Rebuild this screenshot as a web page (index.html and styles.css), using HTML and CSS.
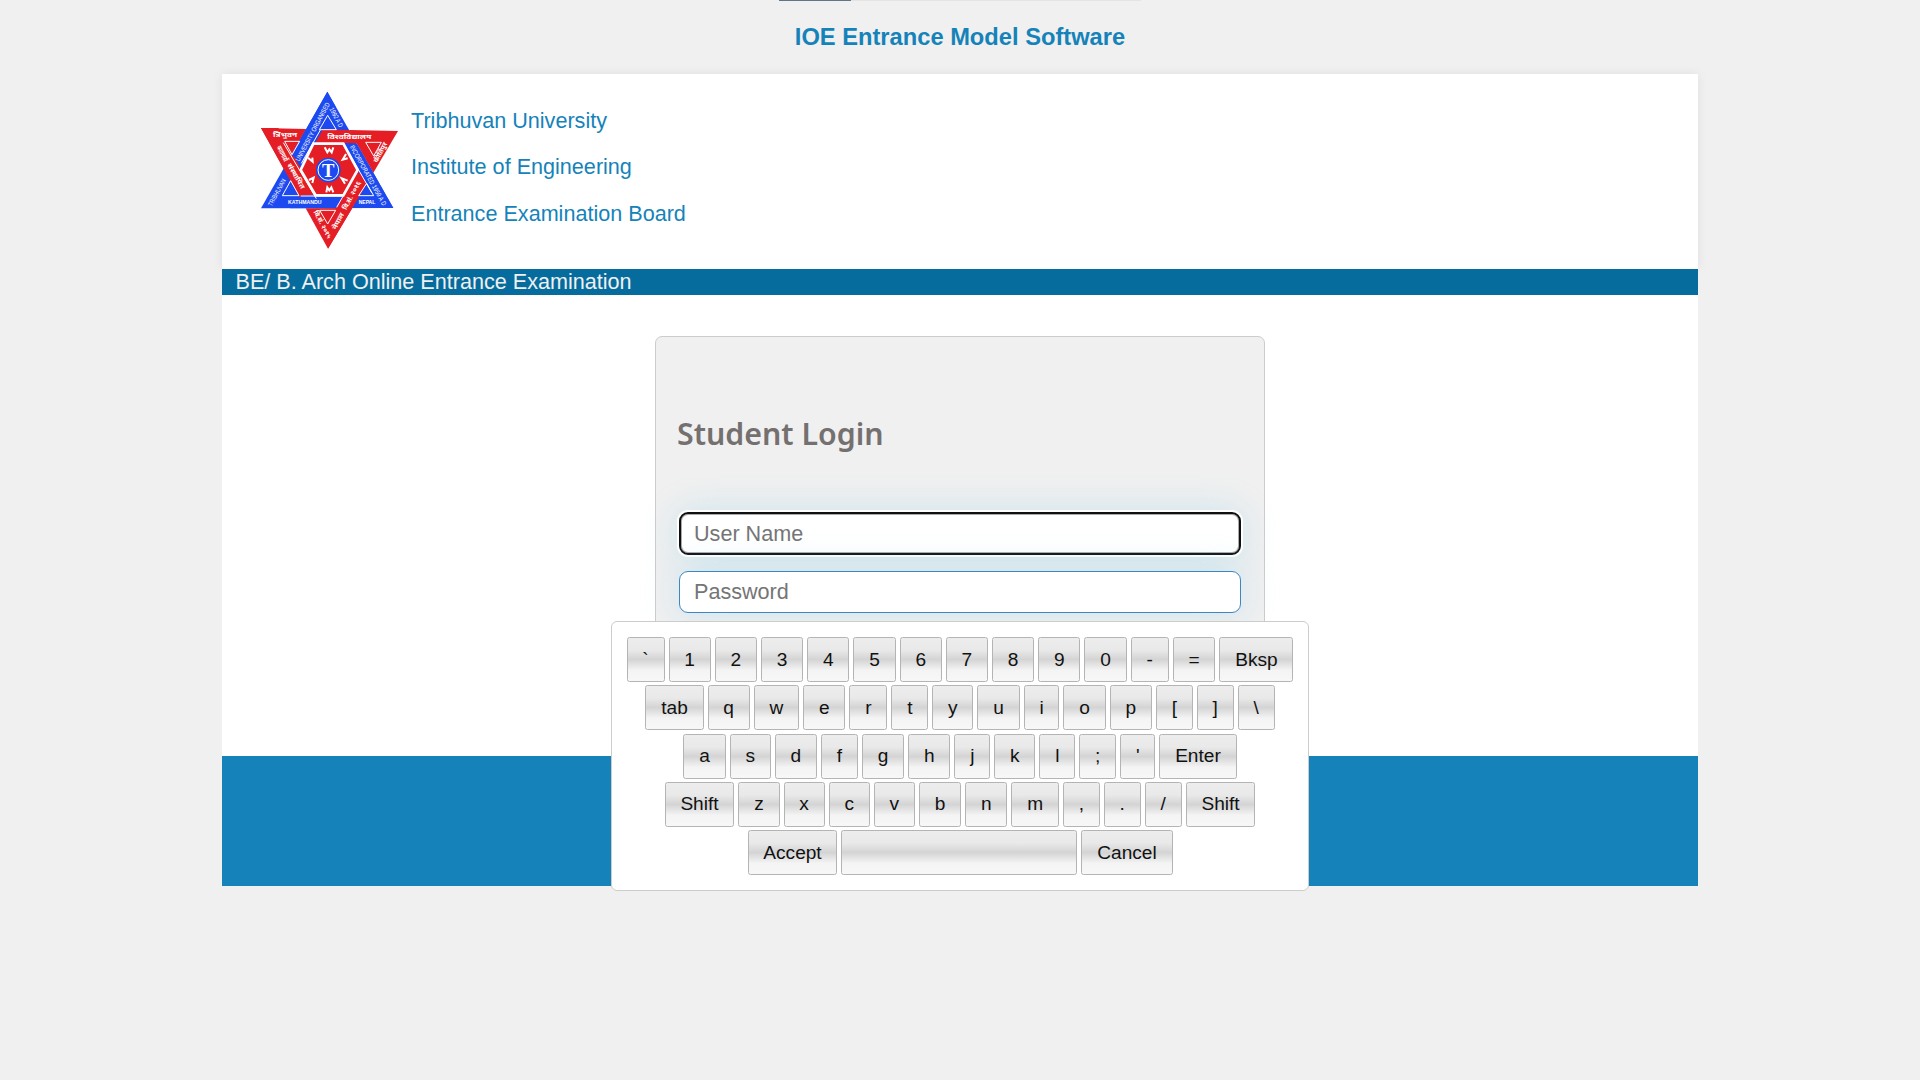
FILE: index.html
```html
<!DOCTYPE html>
<html lang="en">
<head>
<meta charset="utf-8">
<title>IOE Entrance Model Software</title>
<link rel="stylesheet" href="styles.css">
</head>
<body>
<div class="progress"><div class="progress-value"></div></div>
<h1 class="page-title">IOE Entrance Model Software</h1>
<div class="container">
  <header class="header">
    <svg class="logo" viewBox="0 0 480 540" role="img" aria-label="Tribhuvan University">
      <!-- blue and red triangle tips -->
      <polygon class="blue" points="232,35 430,384 33,385"/>
      <polygon class="red" points="33,144 168,147 101,266"/>
      <polygon class="red" points="444,153 297,150 370,278"/>
      <polygon class="red" points="234,506 167,385 307,384"/>
      <!-- interlaced bands -->
      <polygon class="red" points="168,147 297,150 322,190 145,187"/>
      <polygon class="red" points="33,144 85,144 204,358 152,358"/>
      <polygon class="blue" points="155,346 330,346 306,384 120,385"/>
      <polygon class="red" points="370,278 322,278 232,430 234,506"/>
      <polygon class="blue" points="282,192 321,192 430,384 390,384"/>
      <polygon class="blue" points="168,147 210,155 154,252 125,224"/>
      <polygon class="blue" points="232,35 257,80 160,252 125,224"/>
      <path class="edge" d="M211 150 154 250M283 195 365 338M320 278 260 382M100 188 199 356M152 348H275"/>
      <path class="edge" d="M233 106 208 149H259ZM104 184H149L126 224ZM347 187H394L371 228ZM97 347 122 302 147 347ZM326 347H371L350 310ZM209 391H257L233 432Z"/>
      <!-- centre seal -->
      <polygon class="hexagon" points="190,191 280,191 323,270 280,346 197,346 152,270"/>
      <path class="petals" d="M224 202 232 217 238 208 245 217 250 202M229 337 232 322 238 331 244 322 250 337M174 233 188 245 187 233M177 300 191 293 187 309M288 222 278 239 293 235M285 311 275 295 293 302"/>
      <circle class="seal" cx="235" cy="270" r="37"/>
      <circle class="seal-ring" cx="235" cy="270" r="31"/>
      <text class="seal-letter" x="216" y="290">T</text>
      <!-- lettering on the bands -->
      <g class="lettering">
        <text transform="translate(148 245) rotate(-62)" textLength="196" lengthAdjust="spacingAndGlyphs">UNIVERSITY ORGANISED</text>
        <text transform="translate(238 87) rotate(62)" textLength="64" lengthAdjust="spacingAndGlyphs">1992 A D</text>
        <text transform="translate(299 200) rotate(61)" textLength="204" lengthAdjust="spacingAndGlyphs">INCORPORATED 1959 A D</text>
        <text transform="translate(65 380) rotate(-61)" textLength="90" lengthAdjust="spacingAndGlyphs">TRIBHUVAN</text>
        <text class="place" x="114" y="373" textLength="101" lengthAdjust="spacingAndGlyphs">KATHMANDU</text>
        <text class="place" x="326" y="373" textLength="50" lengthAdjust="spacingAndGlyphs">NEPAL</text>
      </g>
      <g class="lettering nepali">
        <text x="69" y="171" textLength="72" lengthAdjust="spacingAndGlyphs">त्रिभुवन</text>
        <text x="232" y="177" textLength="132" lengthAdjust="spacingAndGlyphs">विश्वविद्यालय</text>
        <text transform="translate(80 202) rotate(62)" textLength="50" lengthAdjust="spacingAndGlyphs">काठमाडौं</text>
        <text transform="translate(111 255) rotate(60)" textLength="84" lengthAdjust="spacingAndGlyphs">संस्थापित</text>
        <text transform="translate(382 249) rotate(-62)" textLength="65" lengthAdjust="spacingAndGlyphs">कीर्तिपुर</text>
        <text transform="translate(190 396) rotate(62)" textLength="92" lengthAdjust="spacingAndGlyphs">वि.सं. २०१५</text>
        <text transform="translate(258 450) rotate(-62)" textLength="53" lengthAdjust="spacingAndGlyphs">नेपाल</text>
        <text transform="translate(289 391) rotate(-62)" textLength="94" lengthAdjust="spacingAndGlyphs">वि.सं. २०१६</text>
      </g>
    </svg>
    <div class="organisation">
      <div>Tribhuvan University</div>
      <div>Institute of Engineering</div>
      <div>Entrance Examination Board</div>
    </div>
  </header>
  <div class="exam-bar">BE/ B. Arch Online Entrance Examination</div>
  <main class="content">
    <form class="login">
      <h2 class="login-title">Student Login</h2>
      <input class="field field-focused" type="text" placeholder="User Name">
      <input class="field" type="password" placeholder="Password">
    </form>
  </main>
  <footer class="footer"></footer>
</div>
<div class="keyboard">
  <div class="key-row"><button class="key">`</button><button class="key">1</button><button class="key">2</button><button class="key">3</button><button class="key">4</button><button class="key">5</button><button class="key">6</button><button class="key">7</button><button class="key">8</button><button class="key">9</button><button class="key">0</button><button class="key">-</button><button class="key">=</button><button class="key">Bksp</button></div>
  <div class="key-row"><button class="key">tab</button><button class="key">q</button><button class="key">w</button><button class="key">e</button><button class="key">r</button><button class="key">t</button><button class="key">y</button><button class="key">u</button><button class="key">i</button><button class="key">o</button><button class="key">p</button><button class="key">[</button><button class="key">]</button><button class="key">\</button></div>
  <div class="key-row"><button class="key">a</button><button class="key">s</button><button class="key">d</button><button class="key">f</button><button class="key">g</button><button class="key">h</button><button class="key">j</button><button class="key">k</button><button class="key">l</button><button class="key">;</button><button class="key">'</button><button class="key">Enter</button></div>
  <div class="key-row"><button class="key">Shift</button><button class="key">z</button><button class="key">x</button><button class="key">c</button><button class="key">v</button><button class="key">b</button><button class="key">n</button><button class="key">m</button><button class="key">,</button><button class="key">.</button><button class="key">/</button><button class="key">Shift</button></div>
  <div class="key-row"><button class="key">Accept</button><button class="key key-space" aria-label="Space"></button><button class="key">Cancel</button></div>
</div>
</body>
</html>
```
FILE: styles.css
```css
* { box-sizing: border-box; }

body {
  margin: 0;
  height: 1080px;
  overflow: hidden;
  background: #f0f0f0;
  color: #1583b9;
  font-family: "Liberation Sans", Arial, sans-serif;
  font-size: 21.6px;
}

.progress { width: 362px; height: 1px; margin: 0 auto; background: #e4e4e4; }
.progress-value { width: 72px; height: 1px; background: #607586; }

.page-title {
  margin: 0;
  height: 73px;
  font-size: 23.7px;
  line-height: 72px;
  text-align: center;
}

.container { width: 1476px; margin: 0 auto; background: #fff; }

.header {
  display: flex;
  height: 195px;
  padding: 6px 28px;
  box-shadow: 0 0 10px rgba(0, 0, 0, .07);
}

.logo { width: 160px; height: 180px; }
.organisation { padding: 18px 0 0 1px; line-height: 46.4px; }

.blue { fill: #1c4af0; }
.red { fill: #e51d25; }
.edge { fill: none; stroke: #fff; stroke-width: 3; }
.hexagon { fill: #e51d25; stroke: #fff; stroke-width: 8; }
.petals { fill: none; stroke: #fff; stroke-width: 6; }
.seal { fill: #1c4af0; }
.seal-ring { fill: none; stroke: #fff; stroke-width: 3; }
.seal-letter { fill: #fff; font: bold 56px "Liberation Serif", serif; }
.lettering { fill: #fff; font-size: 20px; }
.place { font-size: 18px; font-weight: bold; }
.nepali { font-family: "Noto Sans", sans-serif; font-size: 20px; font-weight: bold; }

.exam-bar {
  position: relative;
  height: 26px;
  padding-left: 13.5px;
  background: #066c9e;
  color: #f0f0f0;
  line-height: 25px;
}

.content { height: 461px; padding-top: 41px; }

.login {
  width: 610px;
  height: 420px;
  margin: 0 auto;
  padding: 76px 23px 0;
  border: 1px solid #ccc;
  border-radius: 7px;
  background: #f0f0f0;
}

.login-title {
  margin: 0 0 57px -2px;
  height: 42px;
  color: #757070;
  font: 600 30.3px/42px "Noto Sans", sans-serif;
}

.field {
  display: block;
  width: 562px;
  height: 42px;
  margin: 0 0 16px;
  padding: 0 14px;
  border: 1px solid #3b87c4;
  border-radius: 9px;
  outline: 0;
  background: #fff;
  font: 21.6px "Liberation Sans", Arial, sans-serif;
  box-shadow: 0 0 36px rgba(155, 213, 235, .42);
}
.field::placeholder { color: #757575; opacity: 1; }

.field-focused {
  height: 43px;
  padding: 0 13px;
  border: 2px solid #101010;
  box-shadow: 0 0 0 2px #fff, inset 0 0 0 1px #aaa, 0 0 36px rgba(155, 213, 235, .48);
}

.footer { height: 130px; background: #1583b9; }

/* on-screen keyboard floats over the page */
.keyboard {
  position: absolute;
  top: 621px;
  left: 611px;
  display: flex;
  flex-direction: column;
  gap: 3.25px;
  width: 698px;
  height: 270px;
  padding: 15px 14px;
  border: 1px solid #ccc;
  border-radius: 6px;
  background: #fff;
}

.key-row { display: flex; justify-content: center; gap: 4px; }

.key {
  height: 45px;
  padding: 0 14.8px;
  border: 1px solid #b4b4b4;
  border-radius: 2.5px;
  background: linear-gradient(#ededed, #e9e9e9 28%, #d4d4d4 50%, #f4f4f4 75%, #f7f7f7);
  color: #111;
  font: 19.1px "Liberation Sans", Arial, sans-serif;
}
.key-space { width: 236px; }
```
